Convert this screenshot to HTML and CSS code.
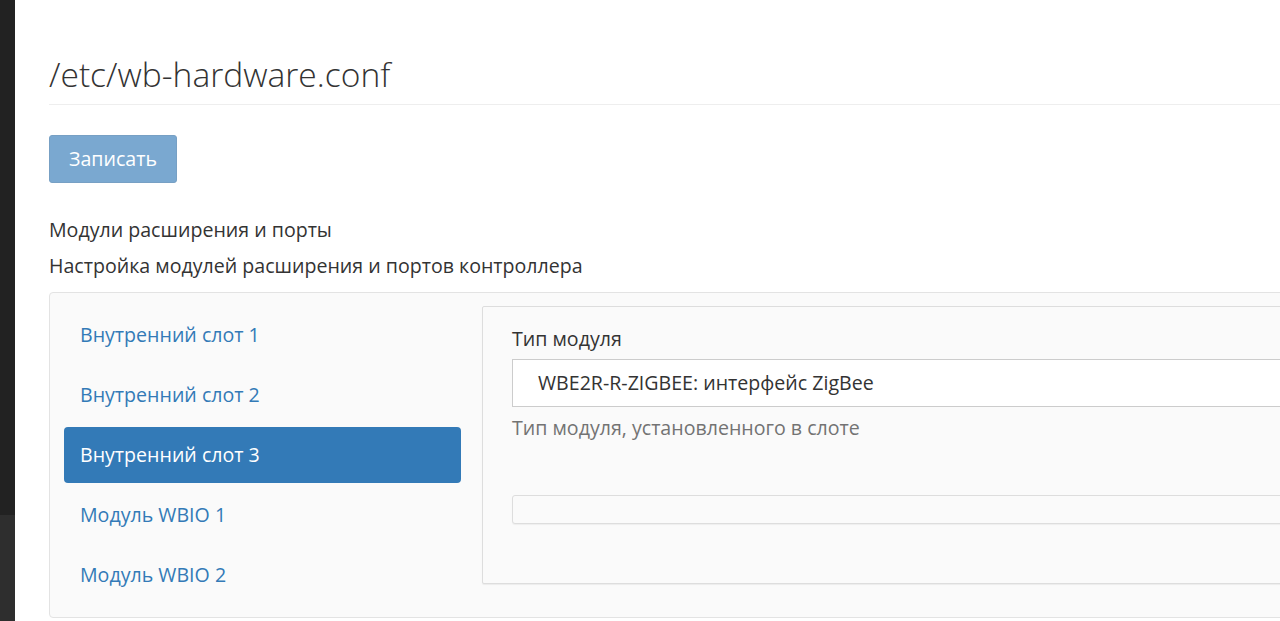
FILE: index.html
```html
<!DOCTYPE html>
<html>
<head>
    <meta charset="utf-8" />
    <link rel="stylesheet" href="styles.css">
    <title>/etc/wb-hardware.conf</title>
</head>

<body>
    <div class="layout">
        <div class="sidebar">
            <div class="sidebar-top"></div>
            <div class="sidebar-bottom"></div>
        </div>

        <div class="main">
            <h1 class="page-header">/etc/wb-hardware.conf</h1>
            <button type="button" class="btn" disabled>Записать</button>

            <p class="section-title">Модули расширения и порты</p>
            <p class="section-desc">Настройка модулей расширения и портов контроллера</p>

            <div class="well">
                <ul class="pills">
                    <li><a href="#">Внутренний слот 1</a></li>
                    <li><a href="#">Внутренний слот 2</a></li>
                    <li class="active"><a href="#">Внутренний слот 3</a></li>
                    <li><a href="#">Модуль WBIO 1</a></li>
                    <li><a href="#">Модуль WBIO 2</a></li>
                </ul>

                <div class="panel">
                    <label class="field-label">Тип модуля</label>
                    <div class="select">WBE2R-R-ZIGBEE: интерфейс ZigBee</div>
                    <p class="help">Тип модуля, установленного в слоте</p>
                    <div class="sub-box"></div>
                </div>
            </div>
        </div>
    </div>
</body>
</html>
```

FILE: styles.css
```css
html, body {
    margin: 0;
    height: 100%;
    overflow: hidden;
    background: #fff;
}
* {
    box-sizing: border-box;
    font-family: "Open Sans", sans-serif;
}
.layout {
    display: flex;
    height: 100%;
}
.sidebar {
    width: 15px;
    flex: none;
    display: flex;
    flex-direction: column;
}
.sidebar-top {
    height: 515px;
    background: #222;
}
.sidebar-bottom {
    flex: 1;
    background: #2e2e2e;
}
.main {
    flex: none;
    width: 1400px;
    padding-left: 34px;
}
.page-header {
    margin: 54px 0 30px 0;
    padding-bottom: 10px;
    border-bottom: 1px solid #eee;
    font-size: 33.6px;
    font-weight: 300;
    line-height: 40px;
    color: #333;
}
.btn {
    display: block;
    padding: 11px 19px;
    font-size: 19.6px;
    line-height: 24px;
    color: #fff;
    background-color: #7aa8d0;
    border: 1px solid #77a0c4;
    border-radius: 3px;
}
.section-title, .section-desc {
    margin: 0;
    font-size: 19.6px;
    line-height: 24px;
    color: #333;
}
.section-title {
    margin-top: 35px;
}
.section-desc {
    margin-top: 12px;
}
.well {
    margin-top: 14px;
    padding: 14px;
    display: grid;
    grid-template-columns: 397px 1fr;
    column-gap: 21px;
    align-items: start;
    background: #fafafa;
    border: 1px solid #e3e3e3;
    border-radius: 4px;
}
.pills {
    list-style: none;
    margin: 0;
    padding: 0;
    display: flex;
    flex-direction: column;
    gap: 4px;
}
.pills a {
    display: block;
    padding: 16px 16px;
    font-size: 19.6px;
    line-height: 24px;
    color: #337ab7;
    text-decoration: none;
    border-radius: 4px;
}
.pills .active a {
    color: #fff;
    background-color: #337ab7;
}
.panel {
    margin-top: -1px;
    height: 278px;
    padding: 20px 29px;
    background: #fafafa;
    border: 1px solid #ddd;
    border-radius: 2px;
    box-shadow: 0 1px 1px rgba(0, 0, 0, .06);
}
.field-label {
    display: block;
    font-size: 19.6px;
    line-height: 24px;
    color: #333;
}
.select {
    margin-top: 8px;
    height: 48px;
    padding: 11px 25px;
    font-size: 19.6px;
    line-height: 24px;
    color: #333;
    background: #fff;
    border: 1px solid #ccc;
}
.help {
    margin: 9px 0 0 0;
    font-size: 19.6px;
    line-height: 24px;
    color: #737373;
}
.sub-box {
    margin-top: 55px;
    height: 29px;
    background: #fafafa;
    border: 1px solid #ddd;
    border-radius: 3px;
    box-shadow: 0 1px 1px rgba(0, 0, 0, .05);
}
```
